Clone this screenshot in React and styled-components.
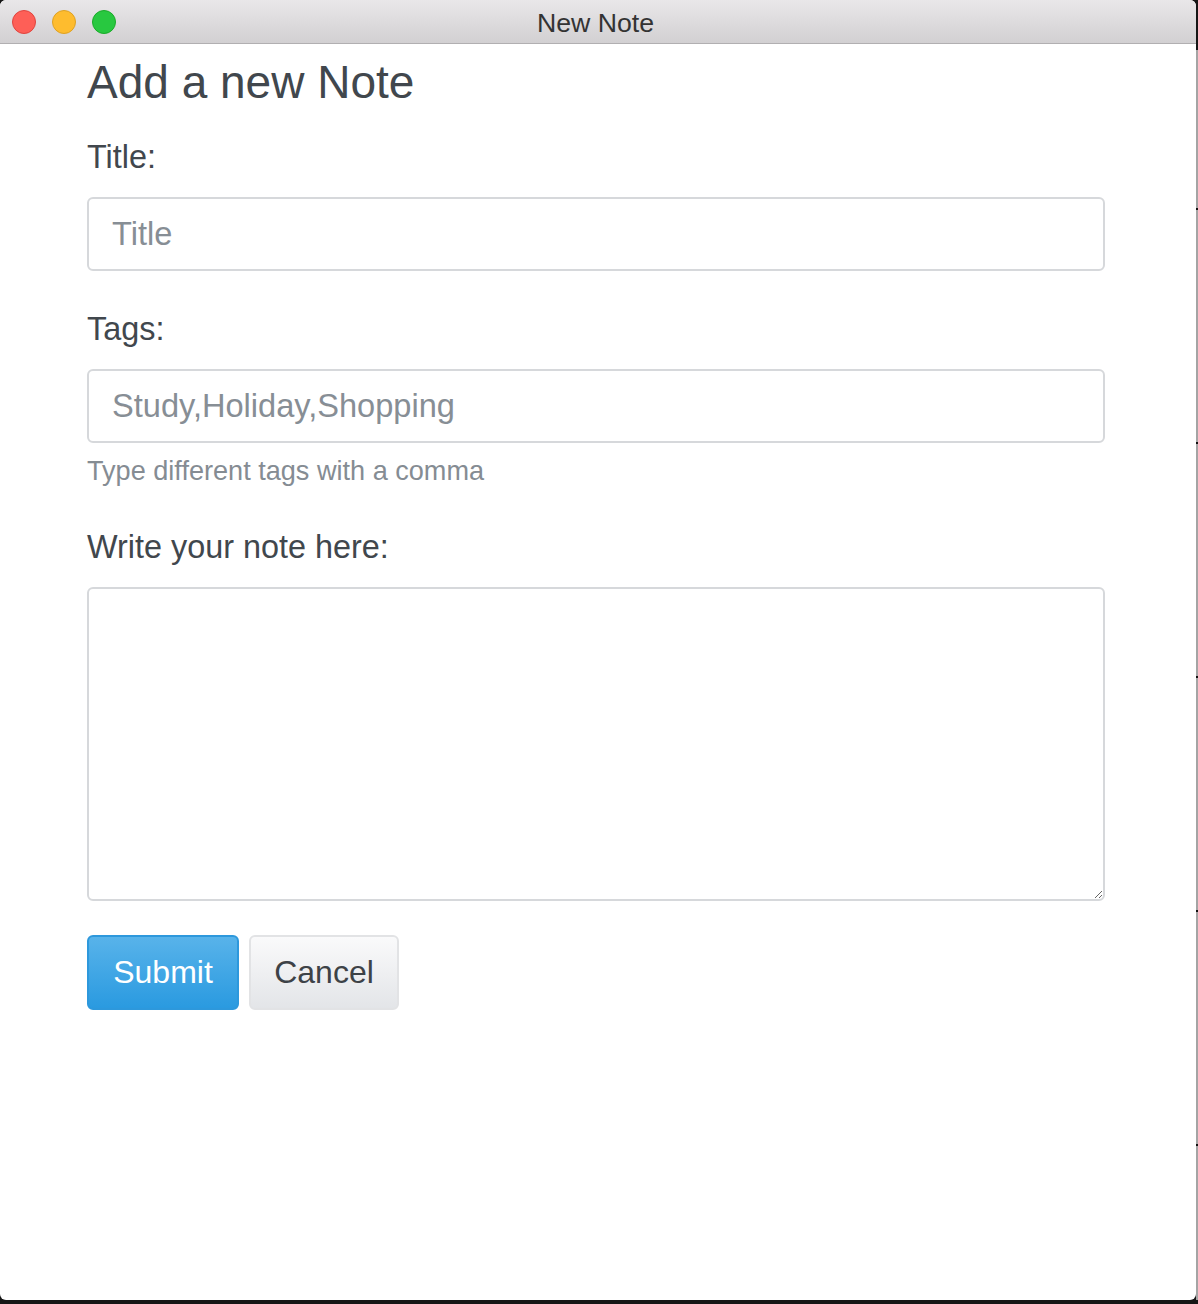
import React, { useState } from "react";
import styled, { createGlobalStyle } from "styled-components";

const GlobalStyle = createGlobalStyle`
  html, body {
    margin: 0;
    padding: 0;
    background: #161616;
  }
  * {
    box-sizing: border-box;
  }
`;

const Desk = styled.div`
  display: flex;
  width: 1198px;
  height: 1304px;
  background: #161616;
`;

const Window = styled.div`
  width: 1196px;
  height: 1300px;
  background: #fff;
  border-radius: 6px;
  overflow: hidden;
  display: flex;
  flex-direction: column;
  font-family: "Liberation Sans", Arial, sans-serif;
`;

const Edge = styled.div`
  width: 2px;
  height: 1300px;
  background:
    linear-gradient(#161616 0 50px, transparent 50px),
    repeating-linear-gradient(
      to bottom,
      #a4a4a4 0 208px,
      #111 208px 210px,
      #a4a4a4 210px 234px
    );
`;

const TitleBar = styled.div`
  position: relative;
  height: 44px;
  flex-shrink: 0;
  display: flex;
  align-items: center;
  justify-content: center;
  padding-top: 3px;
  background: linear-gradient(#e9e7e9, #d2d0d2);
  border-bottom: 1px solid #b1afb1;
`;

const Lights = styled.div`
  position: absolute;
  left: 12px;
  top: 10px;
  display: flex;
  gap: 16px;
`;

const Light = styled.span`
  width: 24px;
  height: 24px;
  border-radius: 50%;
  background: ${(p) => p.color};
  border: 1px solid ${(p) => p.edge};
`;

const WindowTitle = styled.div`
  font-size: 26.7px;
  color: #333;
  margin-right: 5px;
`;

const Content = styled.div`
  padding: 10px 0 0 87px;
  width: 1105px;
`;

const Heading = styled.h2`
  margin: 0 0 24px;
  font-size: 46px;
  line-height: 56px;
  font-weight: 400;
  color: #41474d;
`;

const FormGroup = styled.div`
  margin-bottom: ${(p) => p.gap || 35}px;
`;

const Label = styled.label`
  display: block;
  font-size: 32.4px;
  line-height: 47px;
  margin-bottom: 16px;
  color: #41474d;
`;

const Input = styled.input`
  display: block;
  width: 100%;
  height: 74px;
  padding: 0 23px;
  font-family: inherit;
  font-size: 32.6px;
  color: #41474d;
  border: 2px solid #d6d8db;
  border-radius: 6px;
  outline: none;
  background: #fff;
  &::placeholder {
    color: #878e95;
  }
`;

const TextArea = styled.textarea`
  display: block;
  width: 100%;
  height: 314px;
  padding: 16px 23px;
  font-family: inherit;
  font-size: 32.6px;
  color: #41474d;
  border: 2px solid #d6d8db;
  border-radius: 6px;
  outline: none;
  resize: vertical;
`;

const Help = styled.small`
  display: block;
  margin-top: 8px;
  font-size: 27.1px;
  line-height: 40px;
  color: #858c93;
`;

const Actions = styled.div`
  display: flex;
  gap: 10px;
`;

const Button = styled.button`
  height: 75px;
  width: ${(p) => (p.primary ? 152 : 150)}px;
  padding: 0;
  font-family: inherit;
  font-size: 32px;
  border-radius: 6px;
  cursor: pointer;
  color: ${(p) => (p.primary ? "#fff" : "#3d4247")};
  background: ${(p) =>
    p.primary
      ? "linear-gradient(#58b3ea, #2a9ae0)"
      : "linear-gradient(#fafafb, #e3e5e8)"};
  border: 2px solid ${(p) => (p.primary ? "#2d98dc" : "#e2e3e5")};
`;

export default function App() {
  const [title, setTitle] = useState("");
  const [tags, setTags] = useState("");
  const [body, setBody] = useState("");

  return (
    <>
      <GlobalStyle />
      <Desk>
        <Window>
          <TitleBar>
            <Lights>
              <Light color="#fe5f57" edge="#e0443e" />
              <Light color="#febc2e" edge="#dea123" />
              <Light color="#28c840" edge="#1aab29" />
            </Lights>
            <WindowTitle>New Note</WindowTitle>
          </TitleBar>
          <Content>
            <Heading>Add a new Note</Heading>
            <FormGroup>
              <Label>Title:</Label>
              <Input
                placeholder="Title"
                value={title}
                onChange={(e) => setTitle(e.target.value)}
              />
            </FormGroup>
            <FormGroup gap={33}>
              <Label>Tags:</Label>
              <Input
                placeholder="Study,Holiday,Shopping"
                value={tags}
                onChange={(e) => setTags(e.target.value)}
              />
              <Help>Type different tags with a comma</Help>
            </FormGroup>
            <FormGroup gap={34}>
              <Label>Write your note here:</Label>
              <TextArea value={body} onChange={(e) => setBody(e.target.value)} />
            </FormGroup>
            <Actions>
              <Button primary>Submit</Button>
              <Button>Cancel</Button>
            </Actions>
          </Content>
        </Window>
        <Edge />
      </Desk>
    </>
  );
}
